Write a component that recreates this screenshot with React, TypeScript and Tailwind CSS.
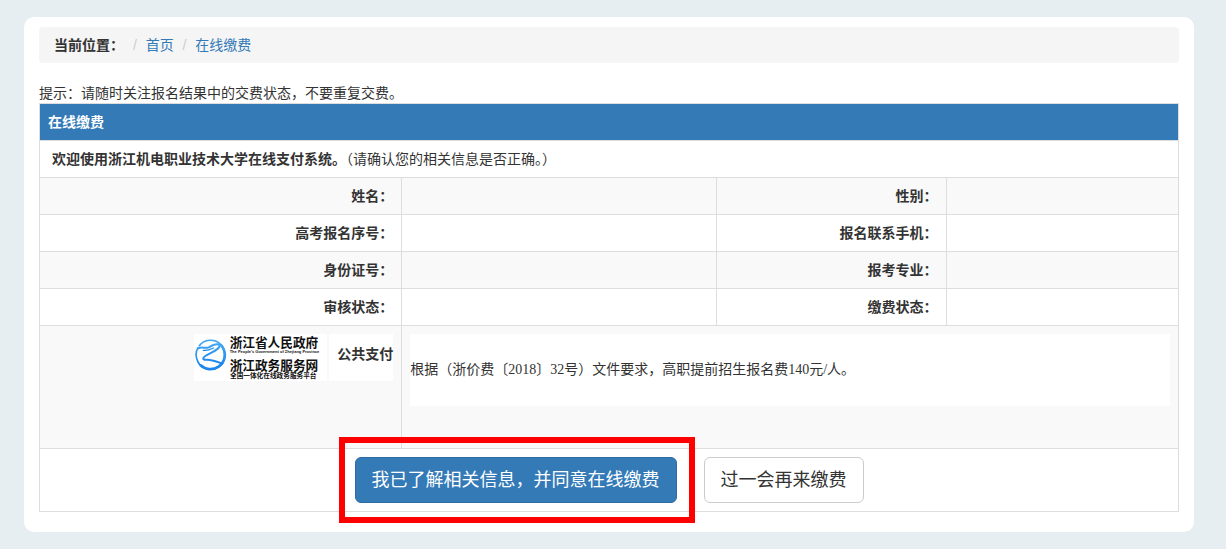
import React from 'react';

interface FieldRow {
  left: string;
  right: string;
  leftValue?: string;
  rightValue?: string;
}

const fieldRows: FieldRow[] = [
  { left: '姓名：', right: '性别：' },
  { left: '高考报名序号：', right: '报名联系手机：' },
  { left: '身份证号：', right: '报考专业：' },
  { left: '审核状态：', right: '缴费状态：' },
];

const breadcrumbs = [
  { label: '首页', href: '#home' },
  { label: '在线缴费', href: '#pay' },
];

const GovLogo: React.FC = () => (
  <svg viewBox="0 0 399 141" className="w-[133px] h-[47px] bg-white" role="img" aria-label="浙江政务服务网">
    <defs>
      <linearGradient id="ring" x1="0" y1="0" x2="0" y2="1">
        <stop offset="0" stopColor="#3fa4f2" />
        <stop offset="1" stopColor="#1b84ee" />
      </linearGradient>
    </defs>
    <g fill="none" stroke="url(#ring)" strokeLinecap="round" strokeLinejoin="round">
      <path d="M16 35 C30 15 62 13 80 31 C97 49 96 80 77 96 C56 113 24 107 12 84 C5 70 5 53 12 41" strokeWidth="5" />
      <path d="M83 35 C98 56 95 82 75 97 C56 110 34 107 20 94" strokeWidth="8" />
      <path d="M13 43 C25 37 33 45 44 40 C56 33 68 27 77 33 C80 43 57 54 39 63 C25 71 23 78 38 77 C56 76 70 84 85 89" strokeWidth="6" />
      <path d="M28 49 C40 51 48 47 59 42" strokeWidth="4" />
    </g>
    <g fill="#111" fontFamily='"Noto Sans CJK SC", sans-serif'>
      <text x="107" y="40" fontSize="38" fontWeight="700">浙江省人民政府</text>
      <text x="107" y="58" fontSize="12" fontWeight="700" fontFamily='"Liberation Sans", sans-serif'>
        The People's Government of Zhejiang Province
      </text>
      <text x="107" y="107" fontSize="38" fontWeight="700">浙江政务服务网</text>
      <text x="108" y="133" fontSize="20" fontWeight="700">全国一体化在线政务服务平台</text>
    </g>
  </svg>
);

const Breadcrumb: React.FC = () => (
  <nav aria-label="当前位置" className="mb-5 rounded bg-[#f5f5f5] px-[15px] py-2">
    <ol>
      <li className="inline-block font-bold">当前位置：</li>
      {breadcrumbs.map(item => (
        <React.Fragment key={item.href}>
          {' '}
          <li className="inline-block">
            <span className="px-[5px] text-[#ccc]" aria-hidden="true">/&nbsp;</span>
            <a href={item.href} className="text-[#337ab7] hover:underline">{item.label}</a>
          </li>
        </React.Fragment>
      ))}
    </ol>
  </nav>
);

export default function App() {
  return (
    <div className="min-h-screen bg-[#e6eef1] pt-[17px] pb-[17px] pl-6 pr-8 text-sm leading-5 text-[#333] font-['Liberation_Sans','Noto_Sans_CJK_SC',sans-serif]">
      <main className="rounded-[10px] bg-white px-[15px] pt-[10px] pb-5">
        <Breadcrumb />
        <p>提示：请随时关注报名结果中的交费状态，不要重复交费。</p>

        <table className="w-full table-fixed border-collapse [&_th]:border [&_td]:border [&_th]:border-[#ddd] [&_td]:border-[#ddd] [&_th]:p-2 [&_td]:p-2 [&_th]:align-top [&_td]:align-top">
          <colgroup>
            <col className="w-[31.8%]" />
            <col className="w-[27.6%]" />
            <col className="w-[20.2%]" />
            <col className="w-[20.4%]" />
          </colgroup>
          <thead>
            <tr className="bg-[#337ab7] text-left text-white">
              <th colSpan={4}>在线缴费</th>
            </tr>
          </thead>
          <tbody>
            <tr>
              <td colSpan={4}>
                <p className="px-1">
                  <strong>欢迎使用浙江机电职业技术大学在线支付系统。</strong>（请确认您的相关信息是否正确。）
                </p>
              </td>
            </tr>
            {fieldRows.map(row => (
              <tr key={row.left} className="odd:bg-white even:bg-[#f9f9f9]">
                <th scope="row" className="text-right">{row.left}</th>
                <td>{row.leftValue}</td>
                <th scope="row" className="text-right">{row.right}</th>
                <td>{row.rightValue}</td>
              </tr>
            ))}
            <tr className="bg-[#f9f9f9]">
              <td>
                <div className="flex justify-end gap-[2px]">
                  <GovLogo />
                  <div className="bg-white pt-[10px] pl-2 font-bold">公共支付</div>
                </div>
              </td>
              <td colSpan={3}>
                <div className="mb-[34px] bg-white py-[26px] font-['Liberation_Serif','Noto_Sans_CJK_SC',serif]">
                  根据（浙价费〔2018〕32号）文件要求，高职提前招生报名费140元/人。
                </div>
              </td>
            </tr>
            <tr>
              <td colSpan={4}>
                <div className="flex justify-center gap-[27px] text-lg leading-6">
                  <div className="relative">
                    <button type="button" className="block rounded-md border border-[#2e6da4] bg-[#337ab7] px-4 py-[10px] text-white hover:bg-[#286090]">
                      我已了解相关信息，并同意在线缴费
                    </button>
                    {/* highlight frame around the confirm button */}
                    <div className="pointer-events-none absolute -left-4 -right-[18px] -inset-y-5 border-6 border-[#ff0000]" />
                  </div>
                  <button type="button" className="rounded-md border border-[#ccc] bg-white px-4 py-[10px] hover:bg-[#e6e6e6]">
                    过一会再来缴费
                  </button>
                </div>
              </td>
            </tr>
          </tbody>
        </table>
      </main>
    </div>
  );
}
